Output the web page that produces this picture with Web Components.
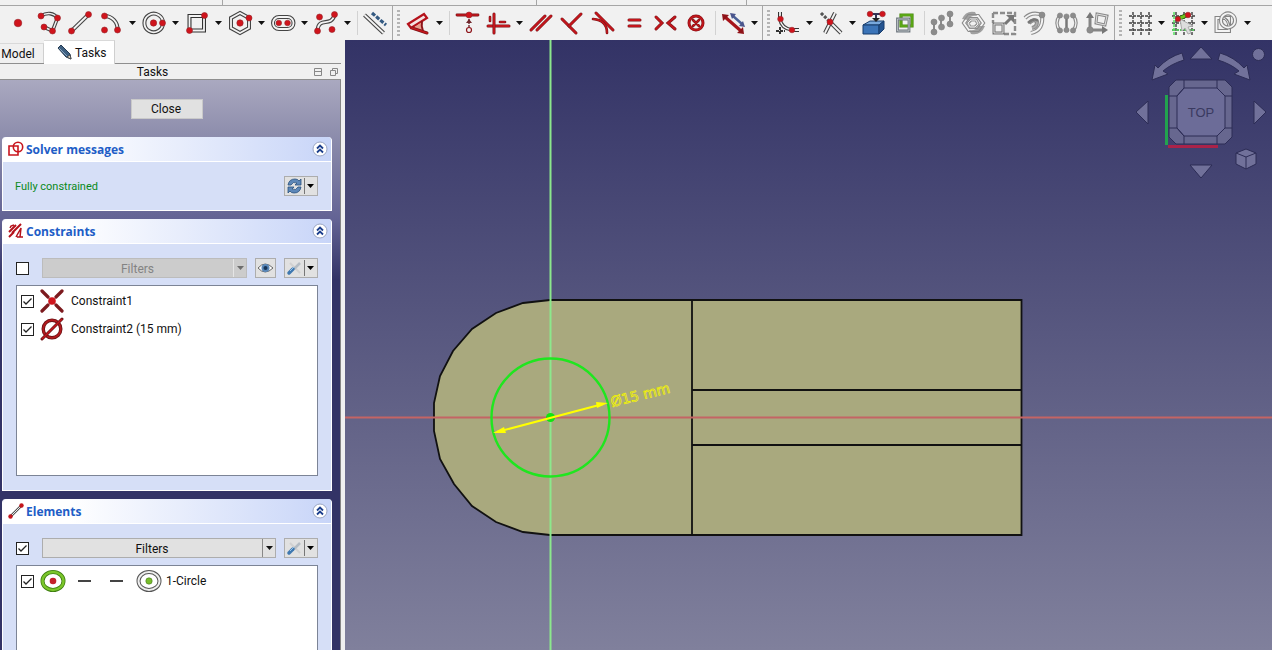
<!DOCTYPE html>
<html lang="en">
<head>
<meta charset="utf-8">
<title>Sketcher</title>
<style>
body { margin: 0; font: 12px/16px Roboto, "Noto Sans", sans-serif; color: #111; overflow: hidden; }
</style>
</head>
<body>
<sketch-app></sketch-app>
<script>
const dot = (x, y, r = 3, c = '#d0141c', s = '#96242a') => `<circle cx="${x}" cy="${y}" r="${r}" fill="${c}" stroke="${s}" stroke-width=".6"/>`;
const rail = (d, o = '#444', i = '#f4f4f4', w = 4) => `<path d="${d}" stroke="${o}" stroke-width="${w}"/><path d="${d}" stroke="${i}" stroke-width="${w - 2.2}"/>`;
const bold = (d, w = 3) => `<path d="${d}" stroke="#7c1418" stroke-width="${w}" stroke-linecap="round"/><path d="${d}" stroke="#c4161c" stroke-width="${w - 1.2}" stroke-linecap="round"/>`;
const gray = (x, y, r = 3) => dot(x, y, r, '#8c8c8c', '#808080');
const gridLines = '<path d="M8 4V27M16 4V27M24 4V27M4 8H28M4 15H28M4 22H28" stroke="#3c3c3c" stroke-width="1.4" stroke-dasharray="3 1"/>';

const ICONS = {
  point: dot(15, 15, 3.8),
  polyline: rail('M7 8C13 4 20 5 23.5 10L18.5 23L10 19', '#444', '#f4f4f4', 3.6) + dot(7, 8) + dot(23.5, 10) + dot(10, 19) + dot(18.5, 23),
  line: rail('M6.500 23L23.500 6.500') + dot(6.5, 23) + dot(23.5, 6.5),
  arc: rail('M8.500 8A13 13 0 0 1 21.500 22') + dot(8.5, 8) + dot(8.5, 22) + dot(21.5, 22),
  circle: rail('M24 15A9.300 9.300 0 1 1 24 14.900') + dot(14.5, 15, 3.2) + dot(23.5, 15, 3),
  rect: rail('M7.500 8H22V22.500H7.500Z', '#333') + dot(7.5, 22.5) + dot(22.5, 7.5),
  hexagon: rail('M15 5L24 10V20L15 25L6 20V10Z') + dot(15, 15, 3.2) + dot(24, 10),
  slot: rail('M11 9H19.500A6 6 0 0 1 19.500 21H11A6 6 0 0 1 11 9Z') + dot(10.8, 15, 2.8) + dot(19.5, 15, 2.8),
  bspline: rail('M6.500 22C8 8 20 20 23.500 7') + dot(8.5, 9) + dot(23.5, 6.5) + dot(6.5, 23) + dot(21, 21.5),
  construct: rail('M4.500 7L23.500 25') + '<path d="M12 5L26 17" stroke="#345a82" stroke-width="3.200" stroke-dasharray="4 1.500"/>',
  dimension: '<path d="M5 16L21 6L24 10L8 20Z" fill="#f4e4e4" stroke="#b5121b" stroke-width="2.200"/><path d="M10 20L19 14V23Z" fill="#e9a090"/><path d="M19 13Q18 18 20 23" stroke="#8e151b" stroke-width="2"/>' + bold('M9 20L24 25'),
  pointOn: bold('M5 7H26', 2.8) + dot(17, 7, 3) + '<path d="M17 11V20" stroke="#70262b" stroke-dasharray="2 1" stroke-width="1.400"/><path d="M14 15L17 11L20 15Z" fill="#70262b"/><circle cx="17" cy="22" r="2.500" stroke="#8e151b" stroke-width="1.200"/>',
  horver: bold('M5 18H26') + bold('M11 6V25') + bold('M7 9V13', 2.6) + bold('M17 14H22', 2.6),
  parallel: bold('M5 22L19 8') + bold('M11 22L25 8'),
  perpendicular: bold('M5 11L19 25') + bold('M24 6L12 18'),
  tangent: bold('M8 5L25 22') + bold('M5 11Q19 12 19 25', 2.6),
  equal: bold('M10 12H21') + bold('M10 18H21'),
  symmetric: bold('M6 9L12 15L6 21') + bold('M25 9L18 15L25 21'),
  block: '<circle cx="15" cy="15" r="7" stroke="#8e1218" stroke-width="3"/><circle cx="15" cy="15" r="7" stroke="#c4161c" stroke-width="1.600"/>' + bold('M12 12L18 18M18 12L12 18', 2.6),
  toggle: '<path d="M15 8L24 16" stroke="#4a5f96" stroke-width="2.400"/><path d="M12 5L18 6L14 11ZM27 19L25 13L21 18Z" fill="#4a558c"/><path d="M7 9L23 23" stroke="#a6141a" stroke-width="3.200"/><path d="M4 6L11 7L5 13ZM26 26L25 19L19 25Z" fill="#8e1218"/>',
  fillet: rail('M7 4V11M19 22H26', '#333') + rail('M7 11Q8 20 19 22', '#444', '#fff', 3.6) + '<path d="M7 19V27M3 23H12" stroke="#333" stroke-width="2" stroke-dasharray="3 1"/>' + dot(7.5, 11, 2.8) + dot(19, 22, 2.8),
  trim: rail('M19 5L9 25M14 14L25 25') + '<path d="M5 5L13 13" stroke="#555" stroke-width="3" stroke-dasharray="3 1.500"/>' + dot(14, 14, 3),
  external: '<path d="M4 17L11 13H25L20 17Z" fill="#78a8dc" stroke="#173c6c"/><path d="M4 17H20V26H4Z" fill="#3b74b8" stroke="#173c6c"/><path d="M20 17L25 13V21L20 26Z" fill="#245491" stroke="#173c6c"/><path d="M11 6H23M17 7V12" stroke="#343454" stroke-width="2"/><path d="M13 10H21L17 14Z" fill="#222"/>' + dot(11, 6, 2.8) + dot(23.5, 6, 2.8),
  carbon: '<path d="M11 7H22V18H11Z" stroke="#4c8c10" stroke-width="3.200"/><path d="M11 7H22V18H11Z" stroke="#5fae17" stroke-width="1.400"/>' + rail('M7.500 11H19V23H7.500Z', '#707880', '#e8ecec', 2.8),
  patternArray: '<path d="M7 14V24M14 10V19M23 6V16" stroke="#8c8c8c" stroke-width="2"/>' + gray(7, 14) + gray(7, 24) + gray(14.5, 10) + gray(14.5, 19) + gray(23, 6) + gray(23, 16),
  rotate: rail('M11 8H20L25 15L20 22H11L6 15Z', '#8c8c8c') + rail('M13 12H18L20 16L17 19H12L10 15Z', '#999', '#eee', 3.2) + '<path d="M4 11Q8 2 17 4L19 8Q13 7 10 12ZM27 18Q23 28 13 26L11 22Q18 23 21 18Z" fill="#8c8c8c" opacity=".8"/>',
  scale: '<path d="M4 5H26V26H15M4 5V15" stroke="#8c8c8c" stroke-width="2.400" stroke-dasharray="5 2"/>' + rail('M5 16H14V25H5Z', '#777', '#f4f4f4', 3) + '<path d="M16 16L22 10" stroke="#777" stroke-width="3"/><path d="M17 7H25V15Z" fill="#777"/>',
  offset: rail('M5 10Q12 3 22 7Q24 22 11 25', '#8c8c8c') + rail('M9 15Q14 10 17 14Q17 19 12 20', '#8c8c8c', '#aaa') + '<path d="M8 15Q15 9 18 13" stroke="#777" stroke-width="2.500"/>' + gray(22, 7, 3),
  mirror: rail('M9 7Q3 15 9 23M22 7Q28 15 22 23', '#8c8c8c', '#f4f4f4', 3.4) + '<path d="M15.500 8V23" stroke="#777" stroke-width="2.500"/>' + gray(9, 7.5, 2.6) + gray(9, 22.5, 2.6) + gray(15.5, 8.5, 2.6) + gray(15.5, 22, 2.6) + gray(22, 7.5, 2.6) + gray(22, 22.5, 2.6),
  transform: '<path d="M8 8V22H22" stroke="#858585" stroke-width="3"/><path d="M4 10L8 4L12 10ZM20 18L26 22L20 26Z" fill="#777"/>' + rail('M15 6L25 8L23 17L14 15Z', '#8c8c8c', '#f4f4f4', 3) + gray(8, 22, 3.2),
  grid: gridLines,
  snap: gridLines + '<path d="M6 4V27M4 22H26" stroke="#56e060" stroke-width="1.500" stroke-dasharray="3 1"/><path d="M10 11L19 7" stroke="#2c5e10" stroke-width="4.400"/><path d="M10 11L19 7" stroke="#6ec41e" stroke-width="3"/><path d="M12 11L25 18L20 19L23 25L20 26L17 20L14 23Z" fill="#ddd" stroke="#aaa"/>' + dot(10, 11, 2.6) + dot(20, 7, 2.8),
  overlap: rail('M5.500 10H18V23H5.500Z', '#858585') + rail('M24 12.500A7 7 0 1 1 24 12.400', '#858585') + rail('M13 10Q17 12 18 18', '#858585', '#f4f4f4', 3),
};

const svgIcon = (name) => `<svg width="31" height="30" viewBox="0 0 31 30" fill="none" aria-hidden="true">${ICONS[name]}</svg>`;
const caret = (c = '#111') => `<svg class="caret" width="7" height="4" viewBox="0 0 7 4" aria-hidden="true"><path d="M0 0H7L3.500 4Z" fill="${c}"/></svg>`;

function define(tag, html, setup) {
  customElements.define(tag, class extends HTMLElement {
    constructor() {
      super();
      const template = document.createElement('template');
      template.innerHTML = html;
      this.attachShadow({ mode: 'open' }).append(template.content.cloneNode(true));
    }
    connectedCallback() { if (setup) setup(this, this.shadowRoot); }
  });
}

define('tool-button', `<style>
:host { display: flex; flex: none; height: 30px; }
button { border: 0; padding: 0; background: none; display: flex; align-items: center; }
.caret { margin: 0 3px 0 2px; }
</style><button type="button"></button>`, (host, root) => {
  const button = root.querySelector('button');
  button.setAttribute('aria-label', host.getAttribute('icon'));
  button.innerHTML = svgIcon(host.getAttribute('icon')) + (host.hasAttribute('menu') ? caret() : '');
});

define('tool-separator', `<style>:host { display: block; flex: none; width: 1px; height: 24px; margin: 0 2px 0 3px; background: #d2d2d2; }</style>`);

define('tool-group', `<style>
:host { display: flex; align-items: center; flex: none; box-sizing: border-box; height: 34px; padding-right: 1px; border-left: 1px solid #a6a6a6; }
:host([first]) { border-left: 0; padding-left: 3px; }
:host([first]) i { display: none; }
i { flex: none; width: 3px; height: 26px; margin: 0 3px 0 4px; background: repeating-linear-gradient(#b4b4b4 0 2px, transparent 2px 4px); }
</style><i></i><slot></slot>`);

define('tool-bar', `<style>
:host { display: block; background: #f1f1f1; overflow: hidden; }
.upper { display: grid; grid-template-columns: 222px 314px 210px 1fr; height: 5px; border-bottom: 1px solid #a6a6a6; }
.upper span + span { border-left: 1px solid #a6a6a6; }
.tools { display: flex; }
</style><div class="upper"><span></span><span></span><span></span><span></span></div><div class="tools" role="toolbar"><slot></slot></div>`);

define('dock-tabs', `<style>
:host { display: flex; align-items: flex-end; height: 24px; box-sizing: border-box; border-bottom: 1px solid #8f8f8f; margin-right: 4px; }
button { font: inherit; color: inherit; border: 0; border-right: 1px solid #cfcfcf; border-top: 1px solid #d9d9d9; background: #f0f0f0; height: 20px; width: 44px; padding: 0 7px 0 0; }
button[aria-selected=true] { background: #fff; width: 71px; height: 24px; margin-bottom: -1px; display: flex; align-items: center; padding: 0 0 0 12px; gap: 2px; }
</style><button role="tab" aria-selected="false">Model</button><button role="tab" aria-selected="true"><svg width="17" height="17" viewBox="0 0 17 17"><path d="M2 4L5 1L14 10L15 15L10 13Z" fill="#3e5f80" stroke="#253b52"/><path d="M3 4L11 12" stroke="#86a4c0"/><path d="M11 13L14 11L15 15Z" fill="#e8dcc8" stroke="#333" stroke-width=".7"/></svg>Tasks</button>`);

define('dock-title', `<style>
:host { display: flex; align-items: center; height: 15px; border-bottom: 1px solid #8f8f8f; margin-right: 4px; padding-top: 1px; margin-top: -1px; }
span { flex: 1; text-align: center; padding-left: 2px; }
button { border: 0; background: none; padding: 0; width: 19px; height: 12px; display: flex; justify-content: flex-end; align-items: center; }
button:last-of-type { padding-right: 3px; }
</style><span><slot></slot></span><button aria-label="Collapse"><svg width="8" height="8" viewBox="0 0 8 8" fill="none" stroke="#888"><path d="M.500 .500H7.500V7.500H.500ZM0 3.500H8"/></svg></button><button aria-label="Float"><svg width="8" height="8" viewBox="0 0 8 8" fill="none" stroke="#888"><path d="M2.500 2.500V.500H7.500V5.500H5.500M.500 2.500H5.500V7.500H.500Z"/></svg></button>`);

define('task-box', `<style>
:host { display: block; border: 1px solid #fff; border-top: 0; border-radius: 4px 4px 0 0; background: #d6dff7; color: #111; }
header { display: flex; align-items: center; height: 25px; box-sizing: border-box; padding: 0 3px 0 5px; gap: 2px; border-radius: 4px 4px 0 0; background: linear-gradient(90deg, #fff 20%, #c8d5f8); border-bottom: 1px solid #fff; }
::slotted(svg) { flex: none; }
h2 { flex: 1; margin: 0; padding-top: 1px; font: bold 12px/16px "Open Sans", "Noto Sans", sans-serif; color: #215dc6; }
button { border: 0; padding: 0; background: none; display: flex; }
.body { padding: 14px 13px 14px; }
</style><header><slot name="icon"></slot><h2><slot name="heading"></slot></h2><button aria-label="Collapse section"><svg width="16" height="16" viewBox="0 0 16 16" fill="none"><circle cx="8" cy="8" r="7" fill="#fff" stroke="#9aa6c4"/><path d="M5 7.500L8 4.500L11 7.500M5 11.500L8 8.500L11 11.500" stroke="#1c3f8c" stroke-width="1.800"/></svg></button></header><div class="body"><slot></slot></div>`);

define('check-mark', `<style>
:host { display: flex; flex: none; }
label { display: flex; align-items: center; }
input { appearance: none; margin: 0; width: 13px; height: 13px; box-sizing: border-box; border: 1px solid #222; background: #fff; }
input:checked { background: #fff url("data:image/svg+xml,%3Csvg xmlns='http://www.w3.org/2000/svg' viewBox='0 0 11 11'%3E%3Cpath d='M1.500 5.500L4 8L9.500 2.500' fill='none' stroke='%23222' stroke-width='1.300'/%3E%3C/svg%3E"); }
</style><label><input type="checkbox"><slot></slot></label>`, (host, root) => {
  const input = root.querySelector('input');
  input.checked = host.hasAttribute('checked');
  if (host.hasAttribute('label')) input.setAttribute('aria-label', host.getAttribute('label'));
});

define('filter-select', `<style>
:host { display: grid; grid-template-columns: 1fr 14px; flex: 1; height: 20px; }
select { grid-area: 1 / 1 / 2 / 3; appearance: none; font: inherit; text-align-last: center; color: #111; border: 1px solid #adadad; border-radius: 0; background: #e1e1e1; padding: 2px 14px 0 0; margin: 0; opacity: 1; min-width: 0; line-height: 16px; }
.arrow { grid-area: 1 / 2; display: grid; place-items: center; pointer-events: none; border-left: 1px solid #888; margin: 1px 1px 1px 0; }
:host([disabled]) select { background: #ccc; border-color: #bcbcbc; color: #838383; }
:host([disabled]) .arrow { border-color: #fff; opacity: .5; }
</style><select aria-label="Filters"><option>Filters</option></select><span class="arrow">${caret()}</span>`, (host, root) => {
  root.querySelector('select').disabled = host.hasAttribute('disabled');
});

define('split-button', `<style>
:host { display: flex; flex: none; }
button { display: flex; align-items: center; box-sizing: border-box; height: 20px; border: 1px solid #adadad; background: #e1e1e1; padding: 0 1px; }
.arrow { display: flex; align-items: center; justify-content: center; width: 11px; height: 16px; border-left: 1px solid #777; margin-left: 1px; }
</style><button type="button"><slot></slot><span class="arrow">${caret('#000')}</span></button>`, (host, root) => {
  root.querySelector('button').setAttribute('aria-label', host.getAttribute('label'));
  if (host.hasAttribute('plain')) root.querySelector('.arrow')?.remove();
});

define('control-row', `<style>
:host { display: flex; align-items: center; height: 20px; gap: 8px; }
::slotted(check-mark) { margin: 0 5px 0 0; }
</style><slot></slot>`);

define('item-list', `<style>
:host { display: block; box-sizing: border-box; height: 191px; margin-top: 7px; padding-top: 1px; border: 1px solid #7c8496; background: #fff; }
</style><slot></slot>`);

define('list-item', `<style>
:host { display: flex; align-items: center; height: 28px; padding-left: 4px; }
</style><slot></slot>`);

const wrench = '<svg width="17" height="16" viewBox="0 0 17 16" fill="none"><path d="M4 3L14 13" stroke="#d0d0d0" stroke-width="2"/><path d="M8 9L14 3" stroke="#b4bcc4" stroke-width="2.500"/><path d="M3 13L7 9" stroke="#3f78b0" stroke-width="3.500" stroke-linecap="round"/><path d="M4 11L8 7" stroke="#98c4e8"/></svg>';

define('task-panel', `<style>
:host { display: flex; flex-direction: column; min-height: 0; background: #f0f0f0; }
.scroll { flex: 1; min-height: 0; overflow: hidden; display: flex; flex-direction: column; gap: 8px; padding: 19px 8px 0 2px; border-right: 1px solid #858585; margin-right: 4px; background: linear-gradient(#aaa9c0, #9090ae 50px, #636394 140px, #333366 200px); }
.close { align-self: center; font: inherit; color: inherit; width: 72px; height: 20px; border: 1px solid #c9c9c9; background: #e1e1e1; padding: 0 2px 0 0; margin-bottom: 10px; flex: none; }
task-box { flex: none; }
.status { flex: 1; color: #0a8a20; margin-left: -1px; font-size: 11px; padding-top: 1px; }
.mark { margin: 0 7px 0 6px; flex: none; }
.pair { margin: 0 4px 0 6px; flex: none; }
</style>
<dock-tabs></dock-tabs>
<dock-title>Tasks</dock-title>
<div class="scroll">
<button class="close">Close</button>
<task-box><svg slot="icon" width="16" height="16" viewBox="0 0 16 16" fill="none" stroke="#c9161e" stroke-width="1.600"><path d="M1 5H10V14H1Z"/><circle cx="10" cy="6" r="4.700"/></svg><span slot="heading">Solver messages</span>
<control-row><span class="status">Fully constrained</span><split-button label="Update"><svg width="17" height="16" viewBox="0 0 17 16"><path d="M2 7Q3 1 9 1Q12 1 13 3L15 1V7H9L11 5Q7 3 5 7ZM15 9Q14 15 8 15Q5 15 4 13L2 15V9H8L6 11Q10 13 12 9Z" fill="#5d87b8" stroke="#28507d" stroke-width=".8"/></svg></split-button></control-row></task-box>
<task-box><svg slot="icon" width="16" height="16" viewBox="0 0 16 16" fill="none" stroke="#b5121b" stroke-width="2"><path d="M1 9L8 2M4 10L13 1M1 14L6 9"/><path d="M2 5L3 3L6 2M9 14H15M8 14L13 5L12 14" stroke-width="1.500"/></svg><span slot="heading">Constraints</span>
<control-row><check-mark label="Filter constraints"></check-mark><filter-select disabled></filter-select><split-button plain label="Show or hide"><svg width="17" height="16" viewBox="0 0 17 16"><path d="M1 8Q8 0 16 8Q8 16 1 8Z" fill="#fff" stroke="#666"/><circle cx="8.500" cy="8" r="4" fill="#5987b8"/><circle cx="8.500" cy="8" r="2" fill="#173456"/></svg></split-button><split-button label="Constraint settings">${wrench}</split-button></control-row>
<item-list>
<list-item><check-mark checked><svg class="mark" width="24" height="24" viewBox="0 0 24 24"><path d="M2 2L8 8M22 2L16 8M2 22L8 16M22 22L16 16" stroke="#7c1a1e" stroke-width="3.200" stroke-linecap="round"/><circle cx="12" cy="12" r="3.800" fill="#d0141c"/></svg>Constraint1</check-mark></list-item>
<list-item><check-mark checked><svg class="mark" width="24" height="24" viewBox="0 0 24 24" fill="none"><circle cx="12" cy="12" r="8.800" stroke="#6c1417" stroke-width="3.400"/><circle cx="12" cy="12" r="8.800" stroke="#b41a1e" stroke-width="1.800"/><path d="M2 22L22 2" stroke="#6c1417" stroke-width="3" stroke-linecap="round"/><path d="M2 22L22 2" stroke="#c4161c" stroke-width="1.600"/></svg>Constraint2 (15 mm)</check-mark></list-item>
</item-list></task-box>
<task-box><svg slot="icon" width="16" height="16" viewBox="0 0 16 16"><path d="M2 14L14 2" stroke="#555" stroke-width="2.500"/><path d="M2 14L14 2" stroke="#eee"/><circle cx="2.500" cy="13.500" r="2.200" fill="#c4161c"/><circle cx="13.500" cy="2.500" r="2.200" fill="#c4161c"/></svg><span slot="heading">Elements</span>
<control-row><check-mark checked label="Filter elements"></check-mark><filter-select></filter-select><split-button label="Element settings">${wrench}</split-button></control-row>
<item-list>
<list-item><check-mark checked><svg class="pair" width="122" height="24" viewBox="0 0 122 24" fill="none"><ellipse cx="13" cy="12" rx="10.500" ry="9" stroke="#3d7d0f" stroke-width="4"/><ellipse cx="13" cy="12" rx="10.500" ry="9" stroke="#7bc62b" stroke-width="2.400"/><circle cx="13" cy="12" r="3.300" fill="#c4202a"/><path d="M38 12H51M70 12H83" stroke="#444" stroke-width="2"/><ellipse cx="109" cy="12" rx="10.500" ry="9" stroke="#555" stroke-width="4"/><ellipse cx="109" cy="12" rx="10.500" ry="9" stroke="#eee" stroke-width="2"/><circle cx="109" cy="12" r="3.200" fill="#78bd2c" stroke="#467820" stroke-width=".6"/></svg>1-Circle</check-mark></list-item>
</item-list></task-box>
</div>`);

define('nav-cube', `<style>:host { display: block; } svg { display: block; }</style>
<svg width="140" height="140" viewBox="1132 42 140 140" fill="#71719a" stroke="#2c2c55" stroke-width="1">
<path d="M1190 59L1201 47L1212 59ZM1190 165L1201 178L1212 165ZM1148 101V124L1136 112ZM1254 101V124L1266 112Z"/>
<path d="M1182 53L1184 60Q1171 64 1163 71L1168 74L1152 80L1155 65L1158 68Q1168 57 1182 53Z"/><path d="M1220 53L1218 60Q1231 64 1239 71L1234 74L1250 80L1247 65L1244 68Q1234 57 1220 53Z"/>
<circle cx="1258.500" cy="54.500" r="6"/>
<path d="M1176 80H1225L1232 87V137L1225 144H1176L1169 137V87Z" fill="#67678f"/>
<path d="M1184 88H1217L1225 96V128L1217 136H1184L1177 128V96Z" fill="#6c6c98"/>
<path d="M1184 80V88L1177 96H1169M1217 80V88L1225 96H1232M1184 144V136L1177 128H1169M1217 144V136L1225 128H1232" fill="none"/>
<path d="M1166.500 95V145" stroke="#22a34e" stroke-width="3"/><path d="M1168 146.500H1218" stroke="#aa2349" stroke-width="3"/>
<path d="M1236 153L1246 149L1256 153V164L1246 169L1236 164Z"/><path d="M1236 153L1246 157L1256 153M1246 157V169" fill="none"/>
<text x="1201" y="117" text-anchor="middle" font-family="Liberation Sans, sans-serif" font-size="13" fill="#3a3a60" stroke="none">TOP</text>
</svg>`);

define('sketch-view', `<style>
:host { display: block; position: relative; min-width: 0; min-height: 0; overflow: hidden; background: linear-gradient(#333366, #80809c); }
.scene { display: block; width: 100%; height: 100%; }
nav-cube { position: absolute; top: 2px; right: 0; }
</style>
<svg class="scene" viewBox="345 40 927 610" preserveAspectRatio="xMinYMin slice" fill="none">
<path d="M550 300L523 303L496 313L472 329L453 351L440 376L434 403V431L440 459L454 484L472 506L496 522L523 532L550 535H1021.500V300Z" fill="#a9a97e" stroke="#111" stroke-width="1.800"/>
<path d="M692 300V535M692 390H1021M692 445H1021" stroke="#111" stroke-width="1.800"/>
<path d="M345 417.500H1272" stroke="#c46464" stroke-width="2"/>
<path d="M550.500 40V650" stroke="#8ce88c" stroke-width="2"/>
<circle cx="550.500" cy="417.500" r="59" stroke="#1fe61f" stroke-width="2.400"/>
<circle cx="550.500" cy="417.500" r="4.500" fill="#0fe60f"/>
<path d="M497 432L603 404" stroke="#ff0" stroke-width="2"/><path d="M493 433L504 427L506 433ZM608 403L596 402L597 408Z" fill="#ff0"/>
<text x="612" y="407" transform="rotate(-14 612 407)" font-family="DejaVu Sans, sans-serif" font-size="14" fill="#a9a97e" stroke="#f4f400" stroke-width=".7">Ø15 mm</text>
</svg><nav-cube></nav-cube>`);

const menus = new Set(['arc', 'circle', 'rect', 'hexagon', 'slot', 'bspline', 'dimension', 'horver', 'toggle', 'fillet', 'trim', 'grid', 'snap', 'overlap']);
const groups = [
  'point polyline line arc circle rect hexagon slot bspline | construct',
  'dimension | pointOn horver parallel perpendicular tangent equal symmetric block | toggle',
  'fillet trim external carbon | patternArray rotate scale offset mirror transform',
  'grid snap overlap',
];
const toolMarkup = groups.map((g, i) => `<tool-group${i ? '' : ' first'}>${g.split(' ').map(n => n === '|' ? '<tool-separator></tool-separator>' : `<tool-button icon="${n}"${menus.has(n) ? ' menu' : ''}></tool-button>`).join('')}</tool-group>`).join('');

define('sketch-app', `<style>
:host { display: grid; height: 100vh; grid-template: auto minmax(0, 1fr) / 345px minmax(0, 1fr); }
tool-bar { grid-column: 1 / 3; }
</style><tool-bar>${toolMarkup}</tool-bar><task-panel></task-panel><sketch-view></sketch-view>`);
</script>
</body>
</html>
